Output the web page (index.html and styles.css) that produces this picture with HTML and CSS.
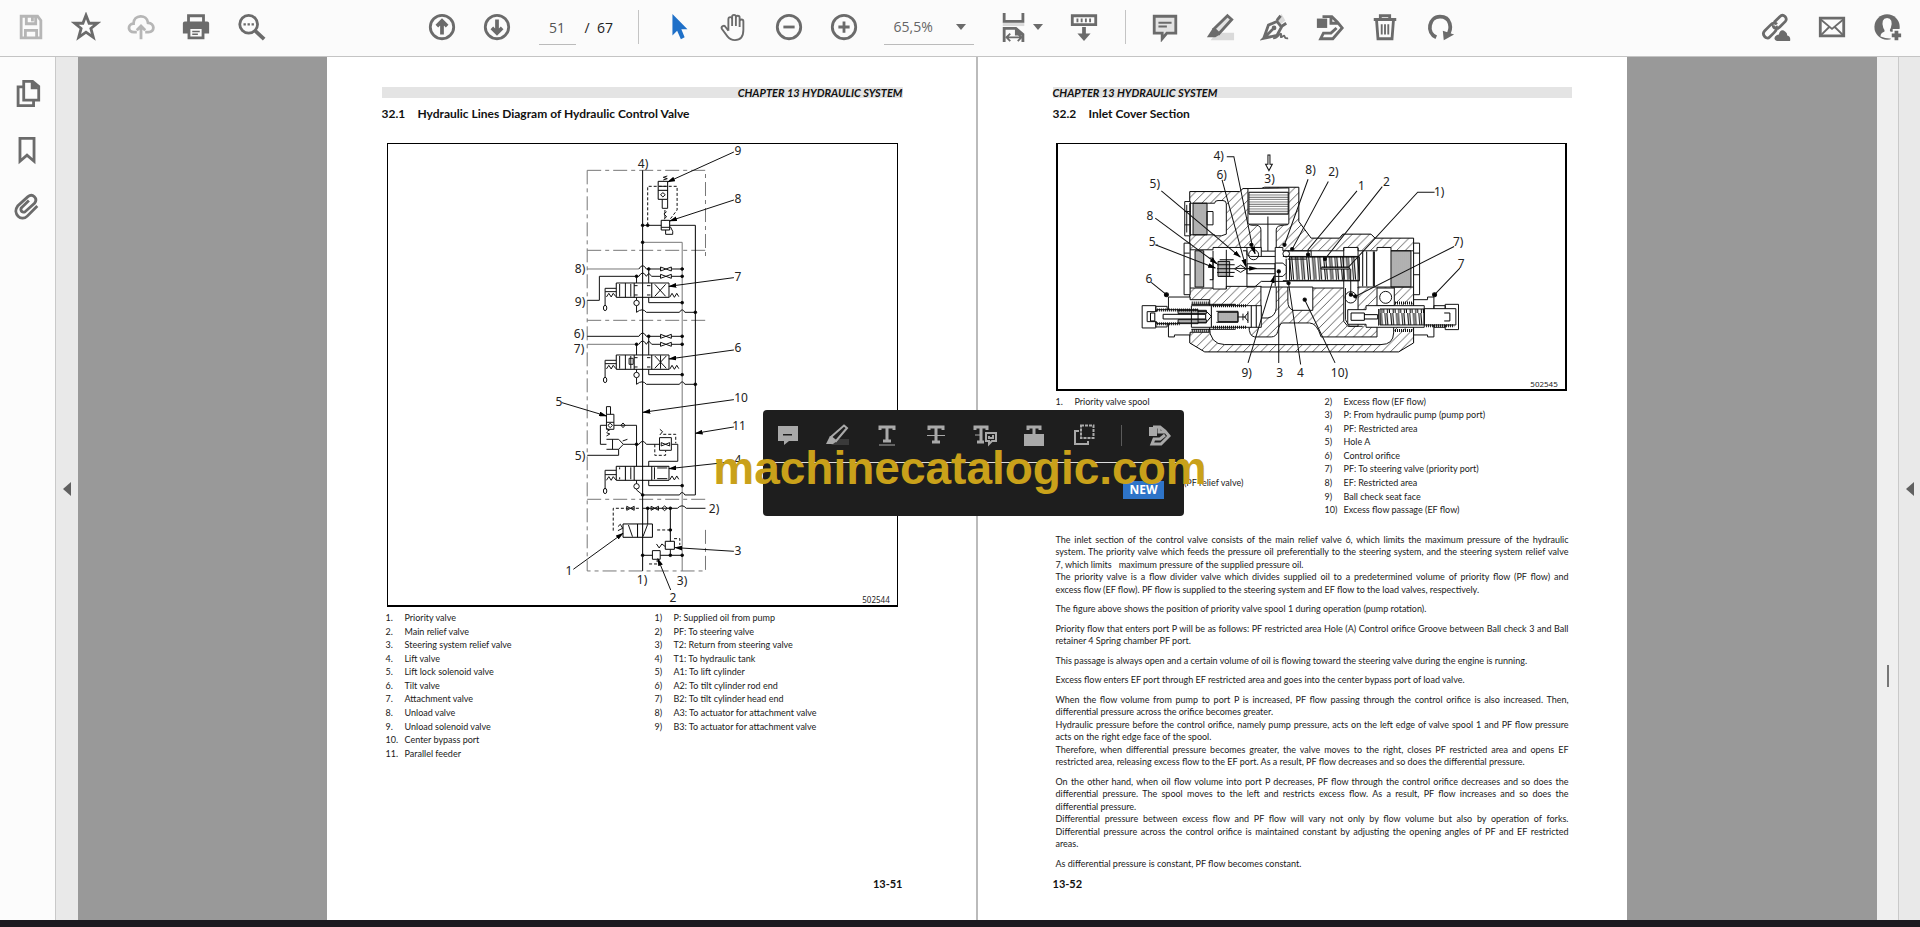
FILE: index.html
```html
<!DOCTYPE html>
<html lang="en">
<head>
<meta charset="utf-8">
<title>Hydraulic System - PDF viewer</title>
<link rel="stylesheet" href="styles.css">
</head>
<body>
<div class="app">
<header class="toolbar">
  <div class="group">
    <button class="tool faded" aria-label="Save"><svg viewBox="0 0 32 32"><path class="ln" d="M6 4.500H23L26.500 9V27.500H5.500V4.500ZM11 4.500V12.500H21V4.500M10 27.500V19.500H22V27.500"/><path class="fl" d="M16 5h3v5h-3z"/></svg></button>
    <button class="tool" aria-label="Favourite"><svg viewBox="0 0 32 32"><path class="ln" d="M16 3.500L19.300 12H28L21.200 17.500L23.800 27L16 21.500L8.200 27L10.800 17.500L4 12H12.700Z"/></svg></button>
    <button class="tool faded" aria-label="Upload"><svg viewBox="0 0 32 32"><path class="ln" d="M11.500 21.500H8.500C1.500 21.500 1.500 13 8 12.500C8 2.500 22.500 2 23.500 11.500C31 12 31 21.500 24 21.500H20.500M16 29V16M11.500 19.500L16 15L20.500 19.500"/></svg></button>
    <button class="tool" aria-label="Print"><svg viewBox="0 0 32 32"><path class="ln" d="M8 11V4H24V11"/><path class="fl" fill-rule="evenodd" d="M4 10H28Q30 10 30 12V23H25V29H7V23H2V12Q2 10 4 10ZM10 18V26H22V18ZM12 20H20V21.500H12ZM12 23H18V24.500H12Z"/></svg></button>
    <button class="tool" aria-label="Search"><svg viewBox="0 0 32 32"><circle class="ln" cx="13.500" cy="13" r="9.500"/><path class="ln wide" d="M20.500 20L30 29"/><path class="fl" d="M8 12h2.500v2.500H8zM12.300 12h2.500v2.500h-2.500zM16.600 12h2.500v2.500h-2.500z"/></svg></button>
  </div>
  <div class="group">
    <button class="tool" aria-label="Previous page"><svg viewBox="0 0 32 32"><circle class="ln" cx="16" cy="16" r="12.500"/><path class="ln wide" d="M16 24V10M10.500 15L16 9.500L21.500 15"/></svg></button>
    <button class="tool" aria-label="Next page"><svg viewBox="0 0 32 32"><circle class="ln" cx="16" cy="16" r="12.500"/><path class="ln wide" d="M16 8V22M10.500 17L16 22.500L21.500 17"/></svg></button>
    <label class="pager"><input class="page-input" value="51" aria-label="Page number"><span>/&nbsp; 67</span></label>
    <span class="sep"></span>
    <button class="tool active" aria-label="Select"><svg viewBox="0 0 32 32"><path class="fl" d="M9 2V25L14 20L18 29L22 27L18.500 18.500H25Z"/></svg></button>
    <button class="tool" aria-label="Hand"><svg viewBox="0 0 32 32"><path class="ln thin" d="M10 20V8Q10 5.500 12 5.500T14 8V15V5Q14 3 16 3T18 5V15V6Q18 4 20 4T22 6V16V10Q22 8 24 8T26 10V19Q26 30 17 30Q12 30 9 26L3 18Q2 16 4 15T7 16L10 20"/></svg></button>
    <button class="tool" aria-label="Zoom out"><svg viewBox="0 0 32 32"><circle class="ln" cx="16" cy="16" r="12.500"/><path class="ln" d="M10 16H22"/></svg></button>
    <button class="tool" aria-label="Zoom in"><svg viewBox="0 0 32 32"><circle class="ln" cx="16" cy="16" r="12.500"/><path class="ln" d="M10 16H22M16 10V22"/></svg></button>
    <button class="zoom-field" aria-label="Zoom level"><span>65,5%</span><i class="caret"></i></button>
    <button class="tool fit" aria-label="Fit page"><svg viewBox="0 0 32 32"><path class="pale" d="M4 11H27V15H4Z"/><path class="ln" d="M5.500 1V10H25.500V1"/><path class="ln" d="M5.500 32V17.500H18L25.500 24V32"/><path class="ln thin" d="M8 27H24M12 23L8 27L12 31M20 23L24 27L20 31"/><path class="fl" d="M17 17L26 25H17Z"/></svg><i class="caret"></i></button>
    <button class="tool" aria-label="Scroll mode"><svg viewBox="0 0 32 32"><path class="ln" d="M3.500 4H28.500V13.500H3.500Z"/><path class="ln thin" d="M9 7V11M13.500 7V11M18 7V11M22.500 7V11"/><path class="ln wide" d="M16 16V26"/><path class="fl" d="M9 23H23L16 31Z"/></svg></button>
    <span class="sep second"></span>
    <button class="tool" aria-label="Comment"><svg viewBox="0 0 32 32"><path class="ln soft" d="M4.500 4.500H27.500V22.500H18L13 28.500V22.500H4.500Z"/><path class="ln thin" d="M9 11.500H23M9 15.500H18"/></svg></button>
    <button class="tool" aria-label="Highlight"><svg viewBox="0 0 32 32"><path class="pale" d="M12 22H31V30H6Z"/><path class="ln soft" d="M24 4L28.500 8L15 23L9.500 18Z"/><path class="fl" d="M8.500 17L16 24L11 27H2Z"/></svg></button>
    <button class="tool" aria-label="Sign"><svg viewBox="0 0 32 32"><path class="pale" d="M17 9L23 2L27 9L22 13Z"/><path class="ln" d="M4 28L9 14L18 10L23 16L18 25L4 28L14 18M18 9L22 4M22 16L28 12"/><circle class="fl" cx="15" cy="17" r="2.500"/><path class="ln thin" d="M14 28C20 28 20 23 22 23S20 29 24 26S24 29 30 28"/></svg></button>
    <button class="tool" aria-label="More tools"><svg viewBox="0 0 32 32"><path class="ln" d="M8 5H18L24 11L29 17L19 28.500H6L9 22.500H17L23 17M17 5V12H24"/><path class="fl" d="M2 7H13V17H2Z"/></svg></button>
    <button class="tool" aria-label="Delete"><svg viewBox="0 0 32 32"><path class="ln" d="M4 8H28M11 7V4H21V7M7 9L8.500 28.500H23.500L25 9"/><path class="ln thin" d="M12.500 13V24M16 13V24M19.500 13V24"/></svg></button>
    <button class="tool" aria-label="Rotate"><svg viewBox="0 0 32 32"><path class="ln wide" d="M12 27C1 22 4 5 16 5S29 18 24 25"/><path class="fl" d="M19 20L31 24L20 30Z"/></svg></button>
  </div>
  <div class="group end">
    <button class="tool" aria-label="Share link"><svg viewBox="0 0 32 32"><path class="ln" d="M14 11L20 5C24 1 29 7 26 10L20 16C17 19 13 17 13 14M17 13C15 11 12 12 10 14L4 20C0 24 6 30 9 27L14 22C16 20 18 18 16 15"/><path class="fl" d="M17 31Q13 30 15 26Q17 24 19 24Q21 17 26 21Q28 22 28 25Q32 26 31 31Z"/></svg></button>
    <button class="tool" aria-label="Email"><svg viewBox="0 0 32 32"><path class="ln" d="M3.500 6.500H28.500V25.500H3.500Z"/><path class="ln thin" d="M4 8L16 18L28 8M4 25L13 16M28 25L19 16"/></svg></button>
    <button class="tool" aria-label="Add person"><svg viewBox="0 0 32 32"><circle class="fl" cx="15" cy="16" r="13.500"/><path class="paper" d="M8 26Q8 22 12 21Q13 20 11 17Q8 7 15 6.500Q22 7 19 17Q17 20 19 21L21 22V28Q15 29 8 26Z"/><path class="halo" d="M25 18V31M19 25H31"/><path class="ln wide" d="M25 20V30M20 25H30"/></svg></button>
  </div>
</header>

<div class="workspace">
  <nav class="rail">
    <button class="tool" aria-label="Pages"><svg viewBox="0 0 32 32"><path class="ln" d="M12.500 3.500H22L28.500 9V23.500H12.500ZM12 9.500H6.500V29.500H23V24"/><path class="fl" d="M20 3V12H28L27 8L22 3Z"/></svg></button>
    <button class="tool" aria-label="Bookmarks"><svg viewBox="0 0 32 32"><path class="ln" d="M8.500 3.500H23.500V28L16 21.500L8.500 28Z"/></svg></button>
    <button class="tool" aria-label="Attachments"><svg viewBox="0 0 32 32"><path class="ln" d="M27 15L16 26C10 32 0 23 6 15L17 5C22 1 28 7 24 12L14 21C10 23 8 18 11 16L18 9"/></svg></button>
  </nav>
  <button class="strip" aria-label="Show pane"><i class="arrow"></i></button>

  <main class="viewer">
    <article class="page left">
      <div class="chapter"><span>CHAPTER 13 HYDRAULIC SYSTEM</span></div>
      <h2 class="title"><span>32.1</span>Hydraulic Lines Diagram of Hydraulic Control Valve</h2>
      <figure class="figure tall">
<svg viewBox="388 144 509 461" role="img" aria-label="Hydraulic lines diagram">
<defs>
<marker id="arc" viewBox="0 0 10 6" refX="9" refY="3" markerWidth="24" markerHeight="15" markerUnits="userSpaceOnUse" orient="auto"><path class="tip" d="M0 0L10 3L0 6Z"/></marker></defs>
<g class="draw" transform="translate(380 130) scale(.338 .3333)">
 <path class="dash gray" d="M613 121H963V380M613 121V1323H963V1190M613 361H963M613 571H963M613 1108H963"/>
 <path class="bold" d="M777 121V1323M933 286V1095"/>
 <path class="gray" d="M777 337H894V1323"/>
 <path d="M777 286H832M858 286H933"/>
 <path class="dot" d="M792 286V169H879V240L858 268M843 240V272"/>
 <path class="bold" d="M823 154H851V208H823ZM823 181H851M832 271H857V300H832Z"/>
 <path d="M835 208V235H851V208M838 150L850 146L838 142L850 138M825 169H848M830 194L837 188L844 194L837 201ZM840 268L848 260L840 252L848 245M845 300V313H866V304L859 290M832 292H857"/>
 <path class="gray" d="M613 417H766M613 643H766"/>
 <path d="M766 417Q777 397 788 417H832M862 417H894M766 439Q777 419 788 439L795 430L804 439H830M862 439H894M613 511H649V439H766"/>
 <path d="M613 619H766Q777 599 788 619H832M862 619H894M766 643Q777 623 788 643L795 633L804 643H830M862 643H894"/>
 <path d="M830 411L862 423V411L830 423ZM830 433L862 445V433L830 445ZM830 613L862 625V613L830 625ZM830 637L862 649V637L830 649Z"/>
 <path d="M795 417V459M795 619V675M759 439V459M759 643V675"/>
 <g id="spool"><path class="bold" d="M699 459V502M752 459V502M804 459V502M699 502H855"/><path d="M699 459H855V502M726 459V502M742 462V500M709 462V500M666 528V475H699M666 485H699M670 501L677 490L684 501L690 490L698 500M857 502L864 490L871 502L878 490L884 500M752 467H762M752 495H762M790 467H800M790 495H800M795 502V518H894M759 502V547Q777 532 788 547H886Q894 532 902 547H933"/><ellipse cx="666" cy="534" rx="5" ry="8"/><circle class="void" cx="759" cy="519" r="8"/></g>
 <path d="M813 463L845 499M845 463L813 499M813 678L847 715M847 678L813 715M830 676V716M737 685H749V703H737Z"/>
 <use href="#spool" y="216"/>
 <path class="bold" d="M699 1009H855M699 1051H855M699 1009V1051M726 1009V1051M752 1009V1051M804 1009V1051"/>
 <path d="M855 1009V1051M742 1012V1048M812 1012V1048M709 1012V1018M709 1042V1048M820 1014H850M820 1046H850M666 1078V1021H699M666 1034H699M670 1051L677 1040L684 1051L690 1040L698 1050M857 1050L864 1038L871 1050L878 1038L884 1048M795 1051V1067H894M759 1051V1080L777 1095H886Q894 1080 902 1095H933"/>
 <ellipse cx="666" cy="1083" rx="5" ry="8"/><circle class="void" cx="759" cy="1069" r="8"/>
 <path d="M670 830H682V853M670 830V853H692V898H670V853M670 877H692M692 886H759V1009M652 886H670M652 886V943H670M670 928H706M670 958H706V976H613M706 928L720 943L706 958M688 928V958M718 933L732 928M720 943H766Q777 925 788 943H828M863 943H881V994H795V1009M672 904L679 900L672 896M670 918L680 912L670 908"/>
 <path d="M674 886L681 880L688 886L681 893ZM713 886L719 879L725 886L719 893ZM827 923H862V961H827ZM832 938L857 948V938L832 948ZM828 915L836 905L828 898"/>
 <path class="dot" d="M838 913H875V940M813 943V976H845V962"/>
 <path class="dot" d="M690 1202V1135H770M820 1200H859M870 1226H887V1245M796 1302H820V1290"/>
 <path d="M777 1135H880Q894 1120 906 1135H963M730 1129L752 1141V1129L730 1141ZM802 1129L824 1141V1129L802 1141ZM834 1135L842 1128L850 1135L842 1142ZM792 1135V1182M704 1190L711 1183L718 1195L704 1202"/>
 <path class="bold" d="M719 1182H806V1222H719ZM762 1182V1222M859 1135V1234M777 1276H894M844 1234H871V1258H844Z"/>
 <path d="M735 1185L747 1220M792 1183L778 1220M859 1258V1276M818 1242L826 1254L834 1242L844 1250"/>
 <path class="void" d="M806 1262H829V1288H806Z"/>
 <g class="solid"><circle cx="777" cy="286" r="4"/><circle cx="792" cy="286" r="4"/><circle cx="777" cy="337" r="4"/><circle cx="795" cy="417" r="4"/><circle cx="894" cy="417" r="4"/><circle cx="894" cy="439" r="4"/><circle cx="759" cy="439" r="4"/><circle cx="894" cy="518" r="4"/><circle cx="933" cy="547" r="4"/><circle cx="795" cy="619" r="4"/><circle cx="894" cy="619" r="4"/><circle cx="894" cy="643" r="4"/><circle cx="759" cy="643" r="4"/><circle cx="894" cy="734" r="4"/><circle cx="933" cy="763" r="4"/><circle cx="759" cy="943" r="4"/><circle cx="894" cy="1067" r="4"/><circle cx="777" cy="1095" r="4"/><circle cx="792" cy="1135" r="4"/><circle cx="859" cy="1135" r="4"/><circle cx="859" cy="1200" r="4"/><circle cx="777" cy="1276" r="4"/><circle cx="859" cy="1276" r="4"/><circle cx="894" cy="1276" r="4"/></g>
 <g class="leaders"><path d="M1047 66L851 156"/><path d="M1047 210L857 273"/><path d="M1047 443L855 469"/><path d="M1047 660L855 687"/><path d="M1047 809L778 847"/><path d="M1047 891L933 910"/><path d="M1047 995L855 1016"/><path d="M538 818L670 858"/><path d="M572 1318L719 1210"/><path d="M1047 1264L873 1253"/><path d="M860 1380L822 1286"/></g>
</g>
<g class="labels"><text x="738" y="155">9</text><text x="643" y="168">4)</text><text x="738" y="203">8</text><text x="580" y="273">8)</text><text x="738" y="281">7</text><text x="580" y="306">9)</text><text x="579" y="338">6)</text><text x="579" y="353">7)</text><text x="738" y="352">6</text><text x="741" y="402">10</text><text x="559" y="406">5</text><text x="739" y="430">11</text><text x="580" y="460">5)</text><text x="738" y="464">4</text><text x="714" y="513">2)</text><text x="738" y="555">3</text><text x="569" y="575">1</text><text x="642" y="584">1)</text><text x="682" y="585">3)</text><text x="673" y="602">2</text><text class="code" x="876" y="603">502544</text></g>
</svg>
      </figure>
      <div class="legend">
        <dl class="list">
          <dt>1.</dt><dd>Priority valve</dd><dt>2.</dt><dd>Main relief valve</dd><dt>3.</dt><dd>Steering system relief valve</dd><dt>4.</dt><dd>Lift valve</dd><dt>5.</dt><dd>Lift lock solenoid valve</dd><dt>6.</dt><dd>Tilt valve</dd><dt>7.</dt><dd>Attachment valve</dd><dt>8.</dt><dd>Unload valve</dd><dt>9.</dt><dd>Unload solenoid valve</dd><dt>10.</dt><dd>Center bypass port</dd><dt>11.</dt><dd>Parallel feeder</dd>
        </dl>
        <dl class="list">
          <dt>1)</dt><dd>P: Supplied oil from pump</dd><dt>2)</dt><dd>PF: To steering valve</dd><dt>3)</dt><dd>T2: Return from steering valve</dd><dt>4)</dt><dd>T1: To hydraulic tank</dd><dt>5)</dt><dd>A1: To lift cylinder</dd><dt>6)</dt><dd>A2: To tilt cylinder rod end</dd><dt>7)</dt><dd>B2: To tilt cylinder head end</dd><dt>8)</dt><dd>A3: To actuator for attachment valve</dd><dt>9)</dt><dd>B3: To actuator for attachment valve</dd>
        </dl>
      </div>
      <footer class="folio">13-51</footer>
    </article>

    <article class="page right">
      <div class="chapter"><span>CHAPTER 13 HYDRAULIC SYSTEM</span></div>
      <h2 class="title"><span>32.2</span>Inlet Cover Section</h2>
      <figure class="figure">
<svg viewBox="1058 144 508 245" role="img" aria-label="Inlet cover section drawing">
<defs><pattern id="hatch" width="26" height="26" patternUnits="userSpaceOnUse"><path class="hatch-line" d="M-4 30L30 -4M-4 4L4 -4M22 30L30 22"/></pattern>
<pattern id="vert" width="6" height="6" patternUnits="userSpaceOnUse"><path class="hatch-line" d="M3 0V6"/></pattern>
<pattern id="horz" width="6" height="7" patternUnits="userSpaceOnUse"><path class="hatch-line" d="M0 3H6"/></pattern>
<pattern id="coil" width="17" height="100" patternUnits="userSpaceOnUse"><path class="coil-line" d="M2 0L10 100M8 0L16 100"/></pattern></defs>
<g class="draw" transform="translate(1130 180) scale(.3333)">
 <path class="bold" fill="url(#hatch)" d="M180 35H330L340 26H395L405 22H508V125L545 175H630L640 163H725L737 175H853V490L808 517H225L180 490Z"/>
 <path class="void" d="M238 438Q240 495 285 495H755Q792 495 793 460V440H743V472H575Q562 430 540 430H460Q450 430 445 455Q440 472 425 472H375Q358 470 358 438Z"/>
 <path class="void" d="M355 26V130Q358 138 380 136Q394 138 394 150V415H415Q438 410 440 385V150Q440 136 465 136Q478 136 478 130V24Z"/>
 <path fill="url(#horz)" d="M358 37H476V103H358Z"/><path d="M358 133H476M415 110V225M405 225L415 215L425 225"/>
 <path class="void" d="M180 70H255Q255 62 265 62H280Q290 62 290 72V163L275 168H255V165H180ZM165 65H182V168H165ZM232 95H250V135H232Z"/>
 <path fill="url(#vert)" d="M190 70H232V165H190Z"/><path d="M165 95H182M165 135H182M171 75V158"/>
 <path class="void" d="M180 210H250V203H395V214H437V203H460V213H643V203H686V213H743V203H785V213H853V322H686V440H655L643 425V325H475V322H395V320H290V328H250V325H180Z"/>
 <path class="void" d="M475 322H550V392H490Q475 385 475 365ZM743 325H795V378H743ZM163 190H181V345H163ZM853 190H871V345H853Z"/>
 <path d="M163 220H180M163 285H180M853 220H871M853 285H871M290 328V210M340 213H352V322M352 203V225L362 230H437M352 322H375L395 305H475M352 252H437V282H352ZM250 213V325M395 214V230M437 214V320M643 205V325M686 205V325"/>
 <path fill="url(#vert)" d="M196 213H222V322H196ZM785 213H845V322H785Z"/>
 <path class="bold" d="M240 235H250V300H240M270 240H312M270 290H312M262 255H315M262 267H440M262 278H315M460 230H690M460 303H690M700 215V320M712 215V320M732 215V320M735 215V320M470 237V300"/>
 <path fill="url(#coil)" d="M480 232H690V303H480Z"/><path fill="url(#vert)" d="M265 245H300V290H265Z"/>
 <path class="void" d="M437 250H460L470 260V280L460 290H437ZM575 264H660V268H575ZM315 267L333 256L350 267L333 278Z"/>
 <circle cx="372" cy="225" r="15"/><circle cx="470" cy="222" r="10"/><circle class="void" cx="664" cy="353" r="17"/><circle class="void" cx="769" cy="353" r="18"/>
 <path d="M664 267V345M648 325V420L660 440H700M475 213H545V230M475 238H530"/>
 <path class="void" d="M116 352H181V360H240V458H181V466H134V472H116ZM37 378H78V445H37ZM78 380H112V442H78ZM853 360H895V352H914V472H895V466H853ZM914 378H948V443H914ZM948 374H988V450H948Z"/>
 <path class="void" d="M185 378H395V443H185ZM52 396H80V390H205V432H80V426H52ZM655 390H710V378H885V443H710V434H655ZM885 387H980V436H885Z"/>
 <path class="bold" d="M100 404H228V418H100ZM205 395H230L245 410L230 428H205M245 378V443M260 395H325V428H260M355 395V430M365 378V443M380 378V443M62 400H75V424H62ZM665 400H705V422H665ZM705 405H745V418H705M748 388V438M945 400H962V424H945M185 374H318M185 449H318"/>
 <path fill="url(#vert)" d="M145 392H230V402H145ZM145 420H230V430H145ZM265 398H325V426H265Z"/><path fill="url(#coil)" d="M752 388H885V436H752Z"/>
 <path class="teeth" d="M82 432H150M82 391H205M890 438H975M186 370H240M186 453H240M797 370H853M797 453H853M250 378H350M250 443H350"/>
 <path d="M325 412H350M340 402V422M355 400L345 412L355 424"/>
</g>
<g class="draw" transform="translate(1050 130) scale(.338 .3333)">
 <path d="M524 80H545L600 350M300 458L345 495M765 148L695 345M825 155L718 358M910 183L765 360V380M985 170L815 388M1140 187H1090L885 412H805M1198 350L905 500L892 495M1215 415L1140 495M678 700V425M743 705L707 460M845 700L755 510"/>
 <g class="leaders"><path d="M600 350L608 372"/><path d="M510 150L580 410"/><path d="M330 183L564 382"/><path d="M312 265L495 402"/><path d="M312 345L490 415"/><path d="M587 700L665 438"/><path d="M550 416H612"/></g>
 <path class="void" d="M646 75H652V103H659L649 122L639 103H646Z"/>
 <g class="solid"><circle cx="345" cy="495" r="6"/><circle cx="1140" cy="495" r="6"/><circle cx="755" cy="510" r="5"/><circle cx="695" cy="345" r="5"/><circle cx="718" cy="358" r="5"/><circle cx="678" cy="425" r="5"/><circle cx="707" cy="460" r="5"/><circle cx="815" cy="388" r="5"/><circle cx="765" cy="375" r="5"/><circle cx="892" cy="495" r="5"/><circle cx="905" cy="500" r="5"/><circle cx="597" cy="345" r="5"/></g>
</g>
<g class="labels"><text x="1219" y="160">4)</text><text x="1222" y="179">6)</text><text x="1270" y="183">3)</text><text x="1311" y="174">8)</text><text x="1334" y="176">2)</text><text x="1362" y="190">1</text><text x="1387" y="186">2</text><text x="1440" y="196">1)</text><text x="1459" y="246">7)</text><text x="1462" y="268">7</text><text x="1155" y="188">5)</text><text x="1150" y="220">8</text><text x="1154" y="246">5.</text><text x="1149" y="283">6</text><text x="1247" y="377">9)</text><text x="1280" y="377">3</text><text x="1301" y="377">4</text><text x="1340" y="377">10)</text><text class="code" x="1545" y="387">502545</text></g>
</svg>
      </figure>
      <div class="legend">
        <dl class="list">
          <dt>1.</dt><dd>Priority valve spool</dd><dt class="seventh">7.</dt><dd class="seventh">Steering system relief valve (PF relief valve)</dd>
        </dl>
        <dl class="list">
          <dt>2)</dt><dd>Excess flow (EF flow)</dd><dt>3)</dt><dd>P: From hydraulic pump (pump port)</dd><dt>4)</dt><dd>PF: Restricted area</dd><dt>5)</dt><dd>Hole A</dd><dt>6)</dt><dd>Control orifice</dd><dt>7)</dt><dd>PF: To steering valve (priority port)</dd><dt>8)</dt><dd>EF: Restricted area</dd><dt>9)</dt><dd>Ball check seat face</dd><dt>10)</dt><dd>Excess flow passage (EF flow)</dd>
        </dl>
      </div>
      <div class="prose">
        <p><span class="full">The inlet section of the control valve consists of the main relief valve 6, which limits the maximum pressure of the hydraulic</span><span class="full">system. The priority valve which feeds the pressure oil preferentially to the steering system, and the steering system relief valve</span><span>7, which limits&nbsp;&nbsp; maximum pressure of the supplied pressure oil.</span><span class="full">The priority valve is a flow divider valve which divides supplied oil to a predetermined volume of priority flow (PF flow) and</span><span>excess flow (EF flow). PF flow is supplied to the steering system and EF flow to the load valves, respectively.</span></p>
        <p><span>The figure above shows the position of priority valve spool 1 during operation (pump rotation).</span></p>
        <p><span class="full">Priority flow that enters port P will be as follows: PF restricted area Hole (A) Control orifice Groove between Ball check 3 and Ball</span><span>retainer 4 Spring chamber PF port.</span></p>
        <p><span>This passage is always open and a certain volume of oil is flowing toward the steering valve during the engine is running.</span></p>
        <p><span>Excess flow enters EF port through EF restricted area and goes into the center bypass port of load valve.</span></p>
        <p><span class="full">When the flow volume from pump to port P is increased, PF flow passing through the control orifice is also increased. Then,</span><span>differential pressure across the orifice becomes greater.</span><span class="full">Hydraulic pressure before the control orifice, namely pump pressure, acts on the left edge of valve spool 1 and PF flow pressure</span><span>acts on the right edge face of the spool.</span><span class="full">Therefore, when differential pressure becomes greater, the valve moves to the right, closes PF restricted area and opens EF</span><span>restricted area, releasing excess flow to the EF port. As a result, PF flow decreases and so does the differential pressure.</span></p>
        <p><span class="full">On the other hand, when oil flow volume into port P decreases, PF flow through the control orifice decreases and so does the</span><span class="full">differential pressure. The spool moves to the left and restricts excess flow. As a result, PF flow increases and so does the</span><span>differential pressure.</span><span class="full">Differential pressure between excess flow and PF flow will vary not only by flow volume but also by operation of forks.</span><span class="full">Differential pressure across the control orifice is maintained constant by adjusting the opening angles of PF and EF restricted</span><span>areas.</span></p>
        <p><span>As differential pressure is constant, PF flow becomes constant.</span></p>
      </div>
      <footer class="folio">13-52</footer>
    </article>
  </main>

  <div class="scrollbar"><span class="thumb"></span></div>
  <button class="strip far" aria-label="Show tools"><i class="arrow"></i></button>
</div>
<div class="taskbar"></div>

<div class="overlay">
  <div class="popup">
    <div class="popup-tools">
      <button class="mini" aria-label="Comment"><svg viewBox="0 0 24 24"><path class="fl" fill-rule="evenodd" d="M2 3H22V18H13L8 22V18H2ZM7 11V12.500H16V11Z"/></svg></button>
      <button class="mini" aria-label="Highlight"><svg viewBox="0 0 24 24"><path class="dim" d="M12 16H24V22H6Z"/><path class="ln" d="M19 2.500L22 5L11 18L6 14Z"/><path class="fl" d="M5 13L12 18L8 21H1Z"/></svg></button>
      <button class="mini" aria-label="Underline"><svg viewBox="0 0 24 24"><path class="ln heavy" d="M5 7V4H19V7M12 4V18M8 18H16"/><path class="ln thin" d="M4 22H20"/></svg></button>
      <button class="mini" aria-label="Strike through"><svg viewBox="0 0 24 24"><path class="ln heavy" d="M5 7V4H19V7M12 4V19M8 19H16"/><path class="ln thin" d="M3 12.500H21"/></svg></button>
      <button class="mini" aria-label="Replace text"><svg viewBox="0 0 24 24"><path class="ln heavy" d="M2 7V4H14V7M8 4V19M4 19H11"/><path class="ln thin" d="M2 12H8"/><path class="ln" d="M13 10H23V18H19L16 21V18H13ZM16 13V15H20V12"/></svg></button>
      <button class="mini" aria-label="Insert text"><svg viewBox="0 0 24 24"><path class="fl" d="M2 11H22V23H2Z"/><path class="ln heavy" d="M6 7V4H18V7M12 4V12"/></svg></button>
      <button class="mini" aria-label="Copy"><svg viewBox="0 0 24 24"><path class="ln dots" d="M9 2.500H21.500V15H9Z"/><path class="ln" d="M7 8H3V21H16V18"/></svg></button>
      <span class="mini-sep"></span>
      <button class="mini" aria-label="Edit"><svg viewBox="0 0 24 24"><path class="ln heavy" d="M6 4H13L18 8L22 13L14 21H5L7 16H13L18 12M12 4V9H18"/><path class="fl" d="M2 4H10V13H2Z"/></svg></button>
    </div>
    <div class="popup-foot"><span class="badge">NEW</span></div>
  </div>
  <div class="watermark">machinecatalogic.com</div>
</div>
</div>
</body>
</html>
```
FILE: styles.css
```css
* { box-sizing: border-box; }
body { margin: 0; font-family: "Open Sans", "Noto Sans", sans-serif; color: #1a1a1a; }
button { border: 0; padding: 0; background: none; font: inherit; color: inherit; }
h2, p, dl, dd, figure { margin: 0; }
.app { position: relative; height: 100vh; display: flex; flex-direction: column; overflow: hidden; background: #fafafa; }

.toolbar { display: grid; grid-template-columns: 412fr auto 449fr; flex: 0 0 57px; padding: 0 4px 2px 3px; border-bottom: 1px solid #c4c4c4; background: #fbfbfb; }
.group { display: flex; align-items: center; }
.group.end { justify-content: flex-end; }
.tool { width: 55px; height: 54px; display: flex; align-items: center; justify-content: center; color: #6b6b6b; }
.group.end .tool { width: 56px; }
.tool svg { width: 30px; height: 30px; }
.faded { color: #b6b6b6; }
.active { color: #1f70c8; }
.ln { fill: none; stroke: currentColor; stroke-width: 3; }
.thin { stroke-width: 2; }
.wide { stroke-width: 4; }
.fl { fill: currentColor; }
.soft { fill: #e3e3e3; }
.pale { fill: #dadada; }
.paper { fill: #fbfbfb; }
.halo { fill: none; stroke: #fbfbfb; stroke-width: 8; }
.pager { display: flex; align-items: center; gap: 9px; width: 113px; padding-left: 14px; font-size: 14px; color: #222; }
.page-input { width: 37px; height: 36px; padding: 2px 0 0; border: 0; border-bottom: 1px solid #bbb; background: none; font: inherit; color: #555; text-align: center; }
.sep { width: 1px; height: 34px; margin-right: 13px; background: #c4c4c4; }
.sep.second { margin: 0 12px 0 13px; }
.zoom-field { display: flex; align-items: center; justify-content: space-between; width: 90px; height: 36px; margin: 0 12px; padding: 0 8px 0 10px; border-bottom: 1px solid #bbb; font-size: 14px; color: #666; }
.caret { border: 5px solid transparent; border-top: 6px solid #6b6b6b; border-bottom: 0; }
.tool.fit { width: 71px; gap: 4px; }

.workspace { flex: 1; min-height: 0; display: flex; }
.rail { flex: 0 0 56px; padding-top: 7px; border-right: 1px solid #c9c9c9; background: #fcfcfc; }
.rail .tool { height: 57px; width: 53px; }
.strip { flex: 0 0 22px; display: flex; align-items: center; justify-content: center; background: #e9e9e9; }
.strip.far { border-left: 1px solid #c9c9c9; }
.arrow { border: 7px solid transparent; border-right: 8px solid #606060; border-left: 0; }
.scrollbar { flex: 0 0 21px; display: flex; justify-content: center; background: #efefef; }
.thumb { width: 2px; height: 22px; margin-top: 608px; background: #777; }
.viewer { flex: 1; display: flex; justify-content: center; padding-right: 2px; background: #999; overflow: hidden; }
.page { flex: 0 1 650px; display: flex; flex-direction: column; padding: 30px 0 28px; background: #fff; font-family: Lato, sans-serif; }
.page.left { padding-left: 55px; padding-right: 73px; border-right: 1px solid #bbb; }
.page.right { padding-left: 75px; padding-right: 55px; border-left: 1px solid #bbb; }
.chapter { height: 11px; line-height: 12px; background: #e4e4e4; font-size: 11px; font-weight: 700; font-style: italic; color: #111; }
.left .chapter { text-align: right; }
.title { display: flex; margin-top: 8px; font-size: 12px; line-height: 16px; font-weight: 700; color: #111; }
.title span { width: 36px; }
.figure { margin: 21px 5px 0; border: 1px solid #000; border-bottom-width: 2px; }
.right .figure { margin-left: 3px; border-left-width: 2px; border-right-width: 2px; }
.figure svg { display: block; width: 100%; overflow: visible; }
.legend { display: grid; grid-template-columns: 269px 1fr; margin: 4px 0 0 4px; font-size: 9px; line-height: 1.5; }
.right .legend { margin: 4px 0 0 3px; }
.list { display: grid; grid-template-columns: 19px 1fr; grid-auto-rows: 1.51em; align-content: start; white-space: nowrap; }
.seventh { grid-row: 7; }
.prose { display: grid; gap: 7px; margin: 17px 3px 0; font-size: 9px; line-height: 1.39; }
.prose span { display: block; white-space: nowrap; }
.prose .full { text-align: justify; text-align-last: justify; white-space: normal; }
.folio { margin-top: auto; font-size: 11px; line-height: 16px; font-weight: 700; color: #111; }
.left .folio { text-align: right; }
.taskbar { flex: 0 0 7px; background: #1c1a20; }

.draw { fill: none; stroke: #111; }
.draw path, .draw circle, .draw ellipse { vector-effect: non-scaling-stroke; stroke-width: 1px; }
.draw .bold { stroke: #000; }
.draw .gray { stroke: #777; }
.draw .dash { stroke-dasharray: 14 4 4 4; }
.draw .dot { stroke-dasharray: 3 2; }
.draw .teeth { stroke-width: 3px; stroke-dasharray: 1 1; }
.draw .void { fill: #fff; }
.leaders path { marker-end: url(#arc); }
.tip { fill: #000; stroke: none; }
.solid { fill: #000; }
.hatch-line { stroke: #111; stroke-width: 2; }
.coil-line { stroke: #000; stroke-width: 3; }
.labels { font: 12px "Noto Sans", sans-serif; fill: #222; text-anchor: middle; }
.labels .code { font-size: 8px; }

.overlay { position: absolute; left: 50%; top: 410px; width: 0; display: flex; justify-content: center; }
.popup { flex: 0 0 421px; margin-left: 27px; height: 106px; border-radius: 4px; background: #1e1e1e; }
.popup-tools { display: flex; align-items: center; justify-content: space-between; height: 53px; padding: 0 13px 2px; border-bottom: 1px solid #ddd; }
.mini { width: 24px; height: 24px; color: #a9a9a9; }
.mini svg { display: block; width: 24px; height: 24px; }
.mini .dim { fill: #3a3a3a; }
.mini .ln { stroke-width: 2; }
.mini .heavy { stroke-width: 3; }
.mini .thin { stroke-width: 1; }
.mini .dots { stroke-dasharray: 3 1; }
.mini-sep { width: 1px; height: 21px; background: #5a5a5a; }
.popup-foot { display: flex; justify-content: flex-end; padding: 18px 20px 0 0; }
.badge { width: 41px; background: #2e74c8; color: #fff; font-size: 12px; line-height: 18px; font-weight: 700; text-align: center; }
.watermark { position: absolute; top: 31px; font: 700 46px/54px "Liberation Sans", Arial, sans-serif; color: #c9a11a; }
```
